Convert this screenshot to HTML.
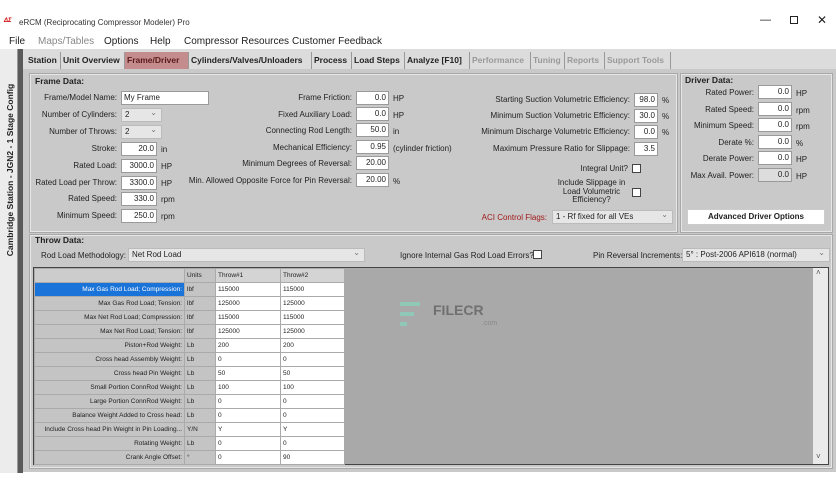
<!DOCTYPE html>
<html><head><meta charset="utf-8"><style>
*{box-sizing:border-box;margin:0;padding:0}
body{width:836px;height:484px;overflow:hidden;background:#fff;font-family:"Liberation Sans",sans-serif;font-size:8px;color:#222;position:relative}
.a{position:absolute;white-space:nowrap}
.r{text-align:right}
.in{position:absolute;background:#fff;border:1px solid #9a9a9a;height:14px;font-size:8px;line-height:12px;padding:0 2px;text-align:right}
.sel{position:absolute;background:#e6e6e6;border:1px solid #bbb;height:14px;font-size:8px;line-height:12px;padding:0 3px}
.sel:after{content:"⌄";position:absolute;right:4px;top:-2px;color:#777}
.cb{position:absolute;width:9px;height:9px;background:#fff;border:1px solid #444}
.tab{position:absolute;top:52px;height:17px;line-height:16px;font-weight:bold;font-size:8.5px;border-right:1px solid #999;padding:0 2px;color:#222;white-space:nowrap;overflow:hidden}
.tab.d{color:#999}
.grp{position:absolute;border:1px solid #e6e6e6;outline:1px solid #a8a8a8}
.b{font-weight:bold}
table{border-collapse:collapse;position:absolute;left:34px;top:268px;font-size:6.5px;table-layout:fixed;width:310px}
td{height:14px;border:1px solid #aaa;padding:0 2px;white-space:nowrap;overflow:hidden}
td.l{width:150px;text-align:right;background:#c4c4c4}
td.u{width:31px;background:#c4c4c4}
td.v{width:65px;background:#fff}
td.v2{width:64px;background:#fff}
</style></head><body>
<div class="a" style="left:4px;top:18px;color:#c00;font-weight:bold;font-size:6px;font-style:italic">ΔΣ</div>
<div class="a" style="left:19px;top:18px;font-size:8px;color:#333">eRCM (Reciprocating Compressor Modeler) Pro</div>
<div class="a" style="left:760px;top:14px;font-size:11px">—</div>
<div class="a" style="left:790px;top:16px;width:8px;height:8px;border:1px solid #222"></div>
<div class="a" style="left:817px;top:13px;font-size:12px">✕</div>
<div class="a" style="top:36px;left:9px;font-size:10px">File</div>
<div class="a" style="top:36px;left:38px;font-size:10px;color:#888">Maps/Tables</div>
<div class="a" style="top:36px;left:104px;font-size:10px">Options</div>
<div class="a" style="top:36px;left:150px;font-size:10px">Help</div>
<div class="a" style="top:36px;left:184px;font-size:10px">Compressor Resources</div>
<div class="a" style="top:36px;left:292px;font-size:10px">Customer Feedback</div>
<div class="a" style="left:0;top:49px;width:17px;height:424px;background:#ececec"></div>
<div class="a" style="left:17px;top:49px;width:6px;height:424px;background:#5a5a5a;border-left:1px solid #999"></div>
<div class="a b" style="left:-80px;top:165px;width:180px;text-align:center;transform:rotate(-90deg);font-size:8.5px;color:#222">Cambridge Station - JGN2 - 1 Stage Config</div>
<div class="a" style="left:23px;top:49px;width:813px;height:20px;background:#dcdcdc"></div>
<div class="tab" style="left:26px;width:35px">Station</div>
<div class="tab" style="left:61px;width:64px">Unit Overview</div>
<div class="tab" style="left:125px;width:64px;background:#c48c8c;color:#5a1a1a">Frame/Driver</div>
<div class="tab" style="left:189px;width:123px">Cylinders/Valves/Unloaders</div>
<div class="tab" style="left:312px;width:40px">Process</div>
<div class="tab" style="left:352px;width:53px">Load Steps</div>
<div class="tab" style="left:405px;width:65px">Analyze [F10]</div>
<div class="tab d" style="left:470px;width:61px">Performance</div>
<div class="tab d" style="left:531px;width:34px">Tuning</div>
<div class="tab d" style="left:565px;width:40px">Reports</div>
<div class="tab d" style="left:605px;width:66px">Support Tools</div>
<div class="a" style="left:23px;top:69px;width:813px;height:403px;background:#c9c9c9"></div>
<div class="grp" style="left:30px;top:74px;width:647px;height:158px"></div>
<div class="grp" style="left:681px;top:74px;width:151px;height:158px"></div>
<div class="grp" style="left:30px;top:235px;width:802px;height:233px"></div>
<div class="a b" style="left:35px;top:76px;font-size:8.5px">Frame Data:</div>
<div class="a r" style="left:0;width:117px;top:93px">Frame/Model Name:</div><div class="in" style="left:121px;top:91px;width:88px;text-align:left">My Frame</div>
<div class="a r" style="left:0;width:117px;top:110px">Number of Cylinders:</div><div class="sel" style="left:121px;top:108px;width:41px">2</div>
<div class="a r" style="left:0;width:117px;top:127px">Number of Throws:</div><div class="sel" style="left:121px;top:125px;width:41px">2</div>
<div class="a r" style="left:0;width:117px;top:144px">Stroke:</div><div class="in" style="left:121px;top:142px;width:36px">20.0</div><div class="a" style="left:161px;top:145px">in</div>
<div class="a r" style="left:0;width:117px;top:161px">Rated Load:</div><div class="in" style="left:121px;top:159px;width:36px">3000.0</div><div class="a" style="left:161px;top:162px">HP</div>
<div class="a r" style="left:0;width:117px;top:178px">Rated Load per Throw:</div><div class="in" style="left:121px;top:176px;width:36px">3300.0</div><div class="a" style="left:161px;top:179px">HP</div>
<div class="a r" style="left:0;width:117px;top:194px">Rated Speed:</div><div class="in" style="left:121px;top:192px;width:36px">330.0</div><div class="a" style="left:161px;top:195px">rpm</div>
<div class="a r" style="left:0;width:117px;top:211px">Minimum Speed:</div><div class="in" style="left:121px;top:209px;width:36px">250.0</div><div class="a" style="left:161px;top:212px">rpm</div>
<div class="a r" style="left:150px;width:202px;top:93px">Frame Friction:</div><div class="in" style="left:356px;top:91px;width:33px">0.0</div><div class="a" style="left:393px;top:94px">HP</div>
<div class="a r" style="left:150px;width:202px;top:110px">Fixed Auxiliary Load:</div><div class="in" style="left:356px;top:107px;width:33px">0.0</div><div class="a" style="left:393px;top:111px">HP</div>
<div class="a r" style="left:150px;width:202px;top:126px">Connecting Rod Length:</div><div class="in" style="left:356px;top:123px;width:33px">50.0</div><div class="a" style="left:393px;top:127px">in</div>
<div class="a r" style="left:150px;width:202px;top:143px">Mechanical Efficiency:</div><div class="in" style="left:356px;top:140px;width:33px">0.95</div><div class="a" style="left:393px;top:144px">(cylinder friction)</div>
<div class="a r" style="left:150px;width:202px;top:159px">Minimum Degrees of Reversal:</div><div class="in" style="left:356px;top:156px;width:33px">20.00</div>
<div class="a r" style="left:150px;width:202px;top:176px">Min. Allowed Opposite Force for Pin Reversal:</div><div class="in" style="left:356px;top:173px;width:33px">20.00</div><div class="a" style="left:393px;top:177px">%</div>
<div class="a r" style="left:400px;width:230px;top:95px">Starting Suction Volumetric Efficiency:</div><div class="in" style="left:634px;top:93px;width:24px">98.0</div><div class="a" style="left:662px;top:96px">%</div>
<div class="a r" style="left:400px;width:230px;top:111px">Minimum Suction Volumetric Efficiency:</div><div class="in" style="left:634px;top:109px;width:24px">30.0</div><div class="a" style="left:662px;top:112px">%</div>
<div class="a r" style="left:400px;width:230px;top:127px">Minimum Discharge Volumetric Efficiency:</div><div class="in" style="left:634px;top:125px;width:24px">0.0</div><div class="a" style="left:662px;top:128px">%</div>
<div class="a r" style="left:400px;width:230px;top:144px">Maximum Pressure Ratio for Slippage:</div><div class="in" style="left:634px;top:142px;width:24px">3.5</div>
<div class="a r" style="left:400px;width:228px;top:164px">Integral Unit?</div><div class="cb" style="left:632px;top:164px"></div>
<div class="a" style="left:555px;top:179px;width:73px;text-align:center;white-space:normal;line-height:8.5px">Include Slippage in Load Volumetric Efficiency?</div><div class="cb" style="left:632px;top:188px"></div>
<div class="a r" style="left:400px;width:147px;top:213px;color:#a01818">ACI Control Flags:</div><div class="sel" style="left:552px;top:210px;width:121px">1 - Rf fixed for all VEs</div>
<div class="a b" style="left:685px;top:75px;font-size:8.5px">Driver Data:</div>
<div class="a r" style="left:680px;width:74px;top:88px">Rated Power:</div><div class="in" style="left:758px;top:85px;width:34px">0.0</div><div class="a" style="left:796px;top:89px">HP</div>
<div class="a r" style="left:680px;width:74px;top:105px">Rated Speed:</div><div class="in" style="left:758px;top:102px;width:34px">0.0</div><div class="a" style="left:796px;top:106px">rpm</div>
<div class="a r" style="left:680px;width:74px;top:121px">Minimum Speed:</div><div class="in" style="left:758px;top:118px;width:34px">0.0</div><div class="a" style="left:796px;top:122px">rpm</div>
<div class="a r" style="left:680px;width:74px;top:138px">Derate %:</div><div class="in" style="left:758px;top:135px;width:34px">0.0</div><div class="a" style="left:796px;top:139px">%</div>
<div class="a r" style="left:680px;width:74px;top:154px">Derate Power:</div><div class="in" style="left:758px;top:151px;width:34px">0.0</div><div class="a" style="left:796px;top:155px">HP</div>
<div class="a r" style="left:680px;width:74px;top:171px">Max Avail. Power:</div><div class="in" style="left:758px;top:168px;width:34px;background:#ddd">0.0</div><div class="a" style="left:796px;top:172px">HP</div>
<div class="a b" style="left:687px;top:209px;width:138px;height:16px;background:#fff;border:1px solid #ccc;text-align:center;line-height:14px">Advanced Driver Options</div>
<div class="a b" style="left:35px;top:235px;font-size:8.5px">Throw Data:</div>
<div class="a" style="left:41px;top:251px">Rod Load Methodology:</div><div class="sel" style="left:128px;top:248px;width:237px">Net Rod Load</div>
<div class="a" style="left:400px;top:251px">Ignore Internal Gas Rod Load Errors?</div><div class="cb" style="left:533px;top:250px"></div>
<div class="a" style="left:593px;top:251px">Pin Reversal Increments:</div><div class="sel" style="left:682px;top:248px;width:148px">5° : Post-2006 API618 (normal)</div>
<div class="a" style="left:33px;top:267px;width:796px;height:198px;background:#a9a9a9;border:1px solid #444"></div>
<div class="a" style="left:813px;top:268px;width:15px;height:196px;background:#eaeaea"></div>
<div class="a" style="left:816px;top:268px;font-size:8px;color:#555">˄</div>
<div class="a" style="left:816px;top:452px;font-size:8px;color:#555">˅</div>
<div class="a" style="left:400px;top:302px;width:20px;height:4px;background:#8fc8b6"></div>
<div class="a" style="left:400px;top:312px;width:14px;height:4px;background:#8fc8b6"></div>
<div class="a" style="left:400px;top:322px;width:7px;height:4px;background:#8fc8b6"></div>
<div class="a b" style="left:433px;top:302px;font-size:14px;color:#707070">FILECR</div>
<div class="a" style="left:482px;top:320px;font-size:7px;color:#888">.com</div>
<table>
<tr><td class="l" style="background:#ccc"></td><td class="u">Units</td><td class="v" style="background:#d4d4d4">Throw#1</td><td class="v2" style="background:#d4d4d4">Throw#2</td></tr>
<tr><td class="l" style="background:#1a73d8;color:#fff">Max Gas Rod Load; Compression:</td><td class="u">lbf</td><td class="v">115000</td><td class="v2">115000</td></tr>
<tr><td class="l">Max Gas Rod Load; Tension:</td><td class="u">lbf</td><td class="v">125000</td><td class="v2">125000</td></tr>
<tr><td class="l">Max Net Rod Load; Compression:</td><td class="u">lbf</td><td class="v">115000</td><td class="v2">115000</td></tr>
<tr><td class="l">Max Net Rod Load; Tension:</td><td class="u">lbf</td><td class="v">125000</td><td class="v2">125000</td></tr>
<tr><td class="l">Piston+Rod Weight:</td><td class="u">Lb</td><td class="v">200</td><td class="v2">200</td></tr>
<tr><td class="l">Cross head Assembly Weight:</td><td class="u">Lb</td><td class="v">0</td><td class="v2">0</td></tr>
<tr><td class="l">Cross head Pin Weight:</td><td class="u">Lb</td><td class="v">50</td><td class="v2">50</td></tr>
<tr><td class="l">Small Portion ConnRod Weight:</td><td class="u">Lb</td><td class="v">100</td><td class="v2">100</td></tr>
<tr><td class="l">Large Portion ConnRod Weight:</td><td class="u">Lb</td><td class="v">0</td><td class="v2">0</td></tr>
<tr><td class="l">Balance Weight Added to Cross head:</td><td class="u">Lb</td><td class="v">0</td><td class="v2">0</td></tr>
<tr><td class="l">Include Cross head Pin Weight in Pin Loading...</td><td class="u">Y/N</td><td class="v">Y</td><td class="v2">Y</td></tr>
<tr><td class="l">Rotating Weight:</td><td class="u">Lb</td><td class="v">0</td><td class="v2">0</td></tr>
<tr><td class="l">Crank Angle Offset:</td><td class="u">°</td><td class="v">0</td><td class="v2">90</td></tr>
</table>
</body></html>
